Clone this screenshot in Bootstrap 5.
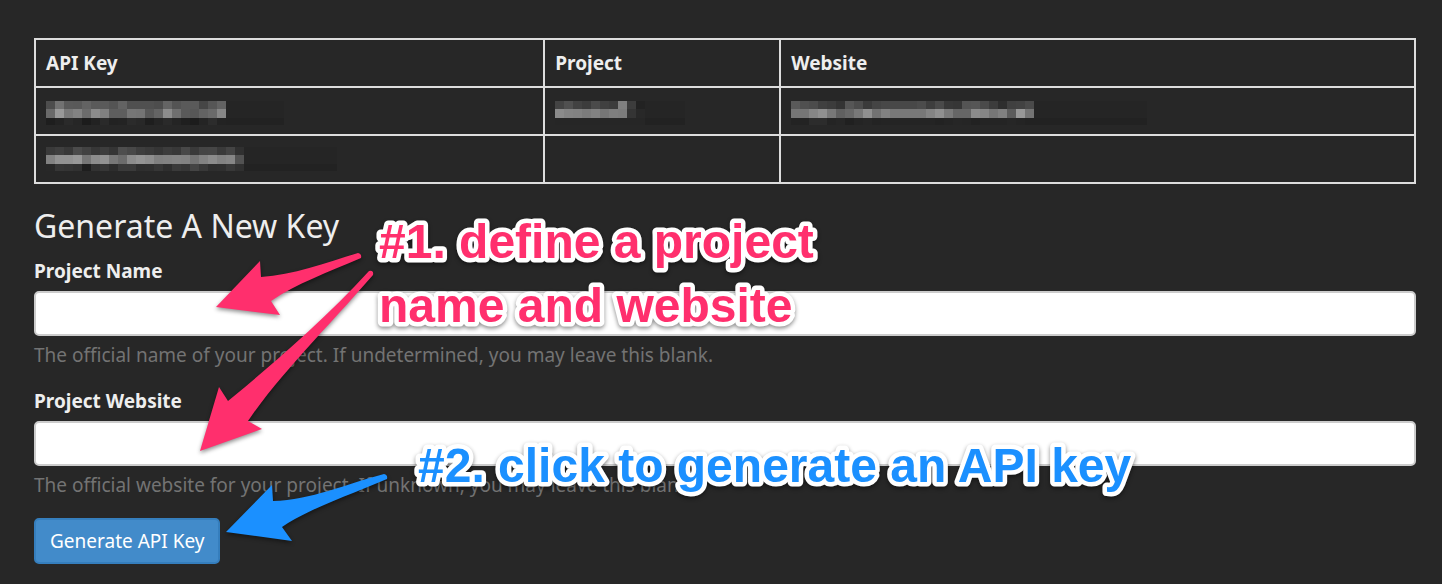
<!DOCTYPE html>
<html lang="en">
<head>
<meta charset="utf-8">
<meta name="viewport" content="width=device-width, initial-scale=1">
<title>API Keys</title>
<link href="https://cdn.jsdelivr.net/npm/bootstrap@5.3.0/dist/css/bootstrap.min.css" rel="stylesheet">
<style>
  body { background: #272727; color: #eee; font-family: "Noto Sans", sans-serif; font-size: 19px; line-height: 26px; }
  .key-page { padding: 38px 26px 20px 34px; }
  .key-table { border-collapse: collapse; table-layout: fixed; width: 100%; margin-bottom: 20px; }
  .key-table th, .key-table td { border: 2px solid #ddd; height: 48px; padding: 0 10px; }
  .key-table .key-active td { padding-top: 4px; }
  .col-key { width: 36.9%; }
  .col-project { width: 17.1%; }
  .mosaic { display: block; }
  .key-title { font-size: 32px; line-height: 44px; font-weight: 400; margin: 0 0 10px; }
  .key-form label { display: block; font-weight: 700; margin-bottom: 7px; }
  .key-form .form-control { height: 45px; border: 2px solid #ccc; border-radius: 5px; background: #fff; color: #555; font-size: 19px; }
  .key-help { color: #737373; margin: 6px 0 20px; }
  .btn-generate { --bs-btn-color: #fff; --bs-btn-bg: #428bca; --bs-btn-border-color: #357ebd; --bs-btn-hover-color: #fff; --bs-btn-hover-bg: #3276b1; height: 46px; padding: 0 14px; border-width: 2px; border-radius: 5px; font-size: 19px; }
  .notes { top: 0; left: 0; width: 1442px; height: 584px; max-width: 100%; pointer-events: none; overflow: hidden; }
  .note-text { font: 700 48px "Liberation Sans", Arial, sans-serif; stroke: #fff; stroke-width: 9px; stroke-linejoin: round; paint-order: stroke; }
  .note-shape { filter: drop-shadow(0 2px 2px rgba(0,0,0,.45)); }
</style>
</head>
<body>
<main class="key-page position-relative">
  <table class="key-table">
    <thead>
      <tr><th class="col-key" scope="col">API Key</th><th class="col-project" scope="col">Project</th><th scope="col">Website</th></tr>
    </thead>
    <tbody>
      <tr class="key-active">
        <td><svg class="mosaic" width="240" height="24" data-tail="238" data-rows="4d725a59635a5a54635050504d64545a5a465663|6a9979826c8b805e5e767458648d705a57636a87|1e232a261c222a22232b281e242a241f1c242c23"></svg></td>
        <td><svg class="mosaic" width="130" height="24" data-tail="130" data-rows="4450423c4a403c803c22|8b84827c82767e7c3428|26262626262626262626"></svg></td>
        <td><svg class="mosaic" width="356" height="24" data-tail="356" data-rows="5a504c403c34564c3a44484848484c3e4a383654564a3c2e40424a|76768690786068789072827878787884907a66668c8676805c9874|23232c2c24262024262324242424242422242625222424242624"></svg></td>
      </tr>
      <tr>
        <td><svg class="mosaic" width="291" height="24" data-tail="291" data-rows="3a3f384b42373d354e483e3a353c38483a45463a4430|82929298768c92786c8c948e8082848274828c828652|283634311e32362d3a3a2e2f362e3a3644382e2f3830"></svg></td>
        <td></td>
        <td></td>
      </tr>
    </tbody>
  </table>

  <h1 class="key-title">Generate A New Key</h1>
  <form class="key-form">
    <label for="project-name">Project Name</label>
    <input class="form-control" id="project-name" type="text" aria-describedby="name-help">
    <p class="key-help" id="name-help">The official name of your project. If undetermined, you may leave this blank.</p>
    <label for="project-site">Project Website</label>
    <input class="form-control" id="project-site" type="text" aria-describedby="site-help">
    <p class="key-help" id="site-help">The official website for your project. If unknown, you may leave this blank.</p>
    <button class="btn btn-generate" type="button">Generate API Key</button>
  </form>

  <svg class="notes position-absolute">
    <g class="note-shape" fill="#ff2f6d">
      <path d="M216 307L260 261L261 277C293 275 325 263 358 253Q362 254 361 258C328 272 296 284 271 301L280 315Z"/>
      <path d="M200 451L219 387L228 401C274 363 324 320 369 271Q374 270 373 275C327 328 280 374 248 421L262 429Z"/>
    </g>
    <path class="note-shape" fill="#1b90ff" d="M226 532L272 485L273 501C311 500 346 484 384 474Q388 475 387 479C350 495 310 508 282 527L292 541Z"/>
    <g class="note-shape note-text">
      <text x="379" y="258" fill="#ff2f6d">#1. define a project</text>
      <text x="379" y="322" fill="#ff2f6d">name and website</text>
      <text x="418" y="482" fill="#1b90ff">#2. click to generate an API key</text>
    </g>
  </svg>
</main>
<script src="https://cdn.jsdelivr.net/npm/bootstrap@5.3.0/dist/js/bootstrap.bundle.min.js"></script>
<script>
  // Each mosaic is three rows of 9px cells, one two-digit grey per cell.
  document.querySelectorAll('.mosaic').forEach(svg => {
    const tops = [0, 8, 17, 24];
    const cell = (x, y, w, h, grey) => {
      const r = document.createElementNS('http://www.w3.org/2000/svg', 'rect');
      Object.entries({ x, y, width: w, height: h, fill: '#' + grey.repeat(3) }).forEach(([k, v]) => r.setAttribute(k, v));
      svg.append(r);
    };
    svg.dataset.rows.split('|').forEach((row, i) => {
      const greys = row.match(/../g), h = tops[i + 1] - tops[i];
      greys.forEach((g, k) => cell(k * 9, tops[i], 9, h, g));
      const end = greys.length * 9;
      cell(end, tops[i], svg.dataset.tail - end, h, i === 2 ? '22' : '25');
    });
  });
</script>
</body>
</html>
